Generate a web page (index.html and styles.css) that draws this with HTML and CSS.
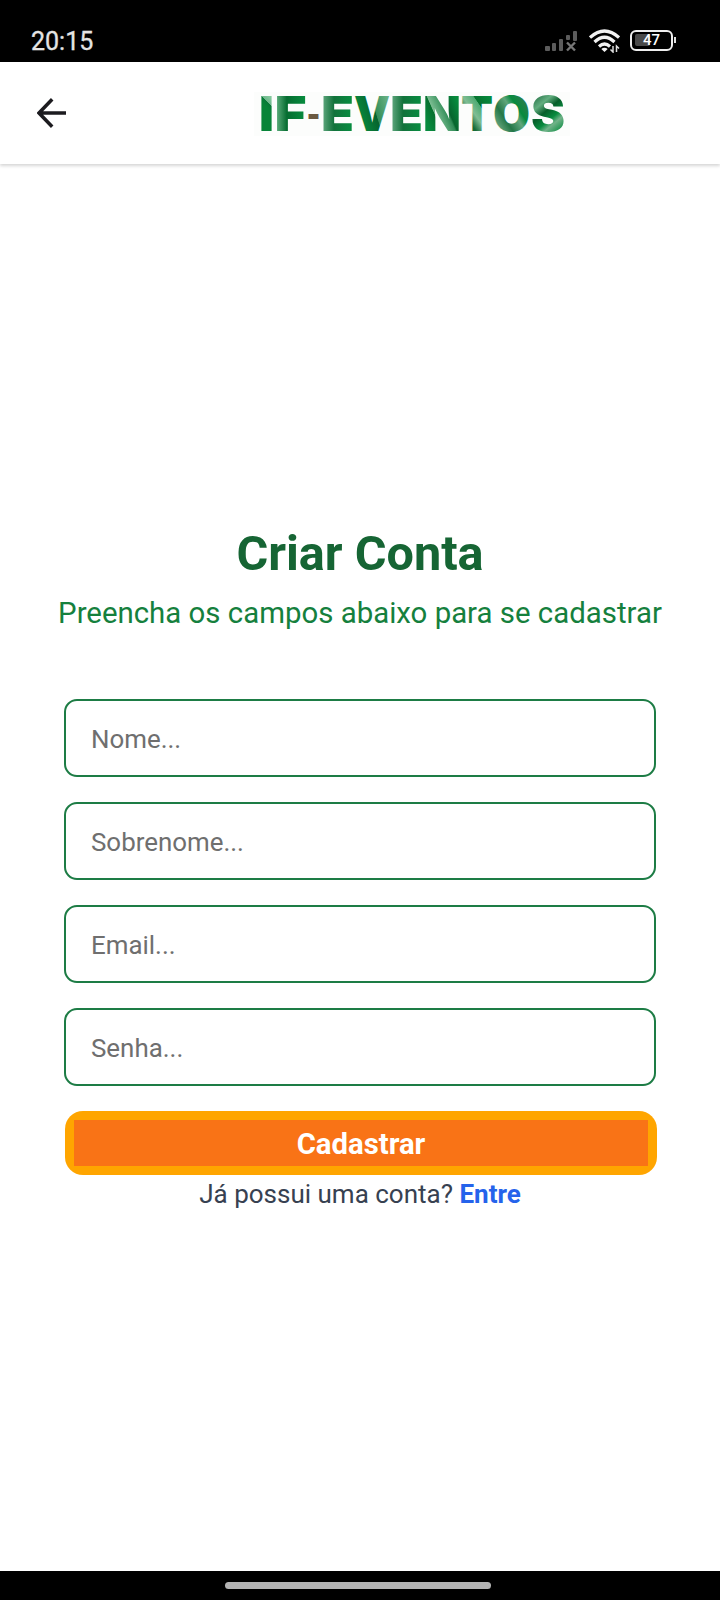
FILE: index.html
```html
<!DOCTYPE html>
<html lang="pt-BR">
<head>
<meta charset="utf-8">
<title>IF-EVENTOS</title>
<link rel="stylesheet" href="styles.css">
</head>
<body>
<div class="screen">
  <div class="status">
    <span class="clock">20:15</span>
    <svg class="signal" width="33" height="22" viewBox="0 0 33 22">
      <g fill="#5c5c5c"><rect x="0" y="16" width="5" height="5" rx="1"/><rect x="7" y="13" width="4" height="8" rx="1"/><rect x="14" y="9" width="4" height="12" rx="1"/><rect x="21" y="5" width="4" height="5" rx="1"/><rect x="28" y="1" width="4" height="10" rx="1"/></g>
      <path d="M22 12.5l8 8M30 12.5l-8 8" stroke="#777" stroke-width="2.4"/>
    </svg>
    <svg class="wifi" width="31" height="24" viewBox="0 0 31 24">
      <g fill="none" stroke="#f2f2f2" stroke-width="3.2"><path d="M1 8.5Q15.500 -4.500 30 8.500"/><path d="M5.500 13Q15.500 3.500 25.500 13"/><path d="M10 17.500Q15.500 12.500 21 17.500"/></g>
      <path d="M12.300 20Q15.500 17.500 18.700 20L15.500 23Z" fill="#f2f2f2"/>
      <path d="M24 17v6l-2.500-2.500M27.500 23v-6l2.500 2.500" fill="none" stroke="#ddd" stroke-width="1.500"/>
    </svg>
    <span class="battery"><span class="level"></span><span class="percent">47</span></span><span class="tip"></span>
  </div>
  <header class="header">
    <svg class="back" width="30" height="30" viewBox="0 0 30 30" fill="none" stroke="#1c1b1f" stroke-width="3.5"><path d="M29 15H2.500M15.200 1.300L2 15L15.200 28.700"/></svg>
    <svg class="logo" width="320" height="76" viewBox="254 75 320 76">
      <defs>
        <linearGradient id="gi" gradientUnits="userSpaceOnUse" x1="269" y1="96" x2="262" y2="103"><stop offset="0" stop-color="#83c89d"/><stop offset=".5" stop-color="#6fb88c"/><stop offset=".52" stop-color="#087837"/><stop offset="1" stop-color="#078438"/></linearGradient>
        <linearGradient id="gf" gradientUnits="userSpaceOnUse" x1="277" y1="110" x2="305" y2="110"><stop stop-color="#58aa78"/><stop offset=".35" stop-color="#066d31"/><stop offset="1" stop-color="#078c3e"/></linearGradient>
        <linearGradient id="ge" gradientUnits="userSpaceOnUse" x1="323" y1="110" x2="352" y2="110"><stop stop-color="#5ca57b"/><stop offset=".38" stop-color="#12723b"/><stop offset="1" stop-color="#078d40"/></linearGradient>
        <linearGradient id="gv" gradientUnits="userSpaceOnUse" x1="356" y1="110" x2="391" y2="99"><stop stop-color="#078b3e"/><stop offset=".48" stop-color="#07642e"/><stop offset=".5" stop-color="#338e59"/><stop offset="1" stop-color="#70b78c"/></linearGradient>
        <linearGradient id="ge2" gradientUnits="userSpaceOnUse" x1="392" y1="110" x2="421" y2="110"><stop stop-color="#5ca57b"/><stop offset=".38" stop-color="#12723b"/><stop offset="1" stop-color="#078d40"/></linearGradient>
        <linearGradient id="gn" gradientUnits="userSpaceOnUse" x1="425" y1="119" x2="459" y2="104"><stop stop-color="#078b3e"/><stop offset=".28" stop-color="#07702f"/><stop offset=".3" stop-color="#7cbd92"/><stop offset=".62" stop-color="#2e8b55"/><stop offset=".67" stop-color="#07652e"/><stop offset="1" stop-color="#078c3e"/></linearGradient>
        <linearGradient id="gt" gradientUnits="userSpaceOnUse" x1="465" y1="115" x2="491" y2="97"><stop stop-color="#156b39"/><stop offset=".27" stop-color="#80bd94"/><stop offset=".55" stop-color="#4eaa72"/><stop offset=".57" stop-color="#06732f"/><stop offset="1" stop-color="#078c3e"/></linearGradient>
        <linearGradient id="go" gradientUnits="userSpaceOnUse" x1="494" y1="125" x2="529" y2="102"><stop stop-color="#72ae89"/><stop offset=".3" stop-color="#247747"/><stop offset=".55" stop-color="#5fa67c"/><stop offset=".7" stop-color="#078b3e"/><stop offset="1" stop-color="#347a51"/></linearGradient>
        <linearGradient id="gs" gradientUnits="userSpaceOnUse" x1="534" y1="97" x2="562" y2="131"><stop stop-color="#29754a"/><stop offset=".23" stop-color="#63ae80"/><stop offset=".42" stop-color="#075e2a"/><stop offset=".62" stop-color="#078b3e"/><stop offset=".75" stop-color="#72b38a"/><stop offset="1" stop-color="#078b3e"/></linearGradient>
      </defs>
      <rect x="254" y="92" width="316" height="44" fill="#fcfdfc"/>
      <text class="wordmark" y="131"><tspan x="259" textLength="15" lengthAdjust="spacingAndGlyphs" fill="url(#gi)">I</tspan><tspan x="274.500" textLength="32" lengthAdjust="spacingAndGlyphs" fill="url(#gf)">F</tspan><tspan class="dash" x="306.500" textLength="14" lengthAdjust="spacingAndGlyphs" fill="#6b5a42">-</tspan><tspan x="321" textLength="33" lengthAdjust="spacingAndGlyphs" fill="url(#ge)">E</tspan><tspan x="354" textLength="36" lengthAdjust="spacingAndGlyphs" fill="url(#gv)">V</tspan><tspan x="390" textLength="33" lengthAdjust="spacingAndGlyphs" fill="url(#ge2)">E</tspan><tspan x="423" textLength="38" lengthAdjust="spacingAndGlyphs" fill="url(#gn)">N</tspan><tspan x="461" textLength="32" lengthAdjust="spacingAndGlyphs" fill="url(#gt)">T</tspan><tspan x="493" textLength="37" lengthAdjust="spacingAndGlyphs" fill="url(#go)">O</tspan><tspan x="531" textLength="34" lengthAdjust="spacingAndGlyphs" fill="url(#gs)">S</tspan></text>
    </svg>
  </header>
  <main class="main">
    <h1 class="title">Criar Conta</h1>
    <p class="subtitle">Preencha os campos abaixo para se cadastrar</p>
    <form class="form">
      <input class="field" placeholder="Nome...">
      <input class="field" placeholder="Sobrenome...">
      <input class="field" placeholder="Email...">
      <input class="field" placeholder="Senha...">
      <button class="submit" type="button"><span class="submit-label">Cadastrar</span></button>
    </form>
    <p class="signin">Já possui uma conta? <a class="link">Entre</a></p>
  </main>
  <div class="navbar"><div class="pill"></div></div>
</div>
</body>
</html>
```
FILE: styles.css
```css
* { box-sizing: border-box; }
body { margin: 0; font-family: Roboto, sans-serif; background: #fff; }
.screen { width: 720px; height: 1600px; display: flex; flex-direction: column; overflow: hidden; }
.status { height: 62px; background: #000; color: #e4e4e4; display: flex; align-items: flex-start; padding: 26px 44px 0 31px; }
.clock { font-size: 25px; line-height: 31px; font-weight: 400; margin-right: auto; -webkit-text-stroke: .3px #e4e4e4; }
.signal { margin: 4px 11px 0 0; }
.wifi { margin: 3px 10px 0 0; }
.battery { width: 43px; height: 21px; margin-top: 3.500px; border: 2px solid #eee; border-radius: 6px; display: grid; align-items: center; justify-items: center; }
.level { grid-area: 1 / 1; justify-self: start; margin-left: 3px; width: 15px; height: 12px; background: #4a4a4a; border-radius: 2px; }
.percent { grid-area: 1 / 1; font-size: 15px; line-height: 17px; font-weight: 500; color: #fff; }
.tip { width: 2px; height: 6px; margin: 11px 0 0 1px; background: #ddd; }
.header { height: 102px; background: #fff; display: flex; align-items: center; padding-left: 37px; box-shadow: 0 2px 3px rgba(0,0,0,.16); }
.logo { margin-left: 187px; }
.wordmark { font-family: Inter, sans-serif; font-weight: 900; font-size: 48px; }
.dash { font-weight: 600; }
.main { flex: 1; display: flex; flex-direction: column; align-items: center; padding-top: 362px; }
.title { margin: 0; font-size: 48.600px; line-height: 56px; font-weight: 700; color: #166534; }
.subtitle { margin: 13px 0 0; font-size: 29.400px; line-height: 36px; color: #15803d; white-space: nowrap; }
.form { width: 592px; margin-top: 68px; display: flex; flex-direction: column; gap: 25px; }
.field { width: 100%; height: 78px; border: 2px solid #1d7c45; border-radius: 13px; background: #fff; padding: 2px 25px 0; font: 25.900px Roboto, sans-serif; outline: 0; }
.field::placeholder { color: #6f6f6f; opacity: 1; }
.submit { height: 64px; padding: 9px; margin-left: 1px; margin-right: -1px; border: 0; border-radius: 18px; background: #ffa500; color: #fff; font: 700 29.300px Roboto, sans-serif; display: flex; }
.submit-label { flex: 1; height: 46px; line-height: 49px; background: #f97316; }
.signin { margin: 3px 0 0; font-size: 26px; line-height: 32px; color: #374151; }
.link { color: #2563eb; font-weight: 700; }
.navbar { height: 29px; background: #000; display: flex; justify-content: center; padding: 11px 4px 0 0; }
.pill { width: 266px; height: 7px; border-radius: 4px; background: #b3b3b3; }
```
